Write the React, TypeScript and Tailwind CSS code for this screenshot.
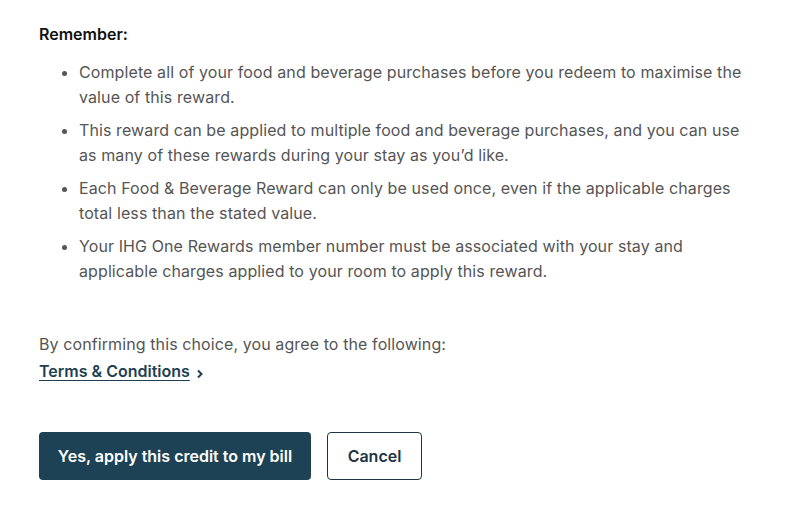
import React from "react";

export default function App() {
  const items = [
    "Complete all of your food and beverage purchases before you redeem to maximise the value of this reward.",
    "This reward can be applied to multiple food and beverage purchases, and you can use as many of these rewards during your stay as you\u2019d like.",
    "Each Food & Beverage Reward can only be used once, even if the applicable charges total less than the stated value.",
    "Your IHG One Rewards member number must be associated with your stay and applicable charges applied to your room to apply this reward.",
  ];
  return (
    <div className="min-h-[517px] w-[796px] bg-white px-[39px] pt-[22px] font-['Inter',sans-serif]">
      <p className="text-[16px] font-semibold leading-[24px] text-[#111]">Remember:</p>
      <ul className="mt-[14px] flex w-[720px] flex-col gap-[8px] pl-[40px] text-[16px] leading-[25px] tracking-[0.1px] text-[#555]">
        {items.map((t) => (
          <li key={t} className="list-disc marker:text-[#555]">
            {t}
          </li>
        ))}
      </ul>
      <p className="mt-[48px] text-[16px] leading-[25px] tracking-[0.1px] text-[#555]">
        By confirming this choice, you agree to the following:
      </p>
      <a className="mt-[2px] inline-flex items-center gap-[6px] text-[16px] font-semibold leading-[25px] text-[#1f3f52] underline underline-offset-[3px]">
        Terms &amp; Conditions
        <svg width="8" height="10" viewBox="0 0 8 10" className="mt-[5px]">
          <path d="M2 1.5 L5.5 5 L2 8.5" fill="none" stroke="#1f3f52" strokeWidth="2" />
        </svg>
      </a>
      <div className="mt-[48px] flex gap-[16px]">
        <button className="h-[48px] w-[272px] rounded-[4px] bg-[#1e4255] text-[16px] font-semibold text-white">
          Yes, apply this credit to my bill
        </button>
        <button className="h-[48px] w-[95px] rounded-[4px] border border-[#1e3344] bg-white text-[16px] font-semibold text-[#1e3344]">
          Cancel
        </button>
      </div>
    </div>
  );
}
